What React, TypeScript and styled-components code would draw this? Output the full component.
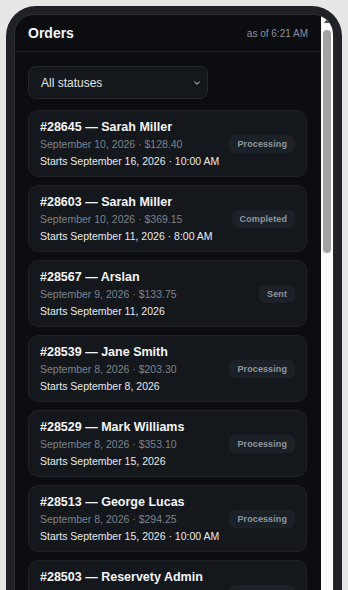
import React from 'react'
import styled, { createGlobalStyle } from 'styled-components'

const GlobalStyle = createGlobalStyle`
  html, body {
    margin: 0;
    padding: 0;
    background: #e7e7e7;
    overflow: hidden;
    font-family: "Liberation Sans", Arial, sans-serif;
  }
`

const Page = styled.div`
  padding: 6px;
`

const Phone = styled.div`
  width: 336px;
  box-sizing: border-box;
  background: #1f2327;
  border-radius: 30px;
  padding: 8px;
`

const Screen = styled.div`
  height: 620px;
  display: flex;
  background: #0b0d10;
  border: 1px solid #2a2e33;
  border-radius: 20px;
  overflow: hidden;
  box-sizing: border-box;
`

const Viewport = styled.div`
  flex: 1;
  min-width: 0;
  overflow: hidden;
`

const ScrollRail = styled.div`
  width: 12px;
  flex-shrink: 0;
  display: flex;
  flex-direction: column;
  align-items: center;
  padding-top: 4px;
  background: #fbfbfb;
`

const ArrowUp = styled.div`
  width: 0;
  height: 0;
  border-left: 3px solid transparent;
  border-right: 3px solid transparent;
  border-bottom: 4px solid #505050;
  margin-bottom: 7px;
`

const Thumb = styled.div`
  width: 8px;
  border-radius: 4px;
  background: #a2a2a2;
`

const Header = styled.div`
  display: flex;
  align-items: center;
  justify-content: space-between;
  height: 36px;
  padding: 0 13px;
  border-bottom: 1px solid #1e2227;
`

const Title = styled.h1`
  margin: 0;
  font-size: 14px;
  font-weight: 700;
  color: #f4f5f7;
`

const Stamp = styled.span`
  font-size: 10px;
  color: #8a9097;
`

const Body = styled.div`
  padding: 14px 14px 14px 13px;
`

const Select = styled.div`
  width: 180px;
  height: 33px;
  box-sizing: border-box;
  display: flex;
  align-items: center;
  justify-content: space-between;
  padding: 0 6px 0 12px;
  background: #14171b;
  border: 1px solid #23272c;
  border-radius: 8px;
  font-size: 12px;
  color: #e2e4e7;
  margin-bottom: 11px;
`

const List = styled.div`
  display: flex;
  flex-direction: column;
  gap: 8px;
`

const Card = styled.div`
  display: flex;
  align-items: center;
  justify-content: space-between;
  padding: 9px 11px 7px 11px;
  background: #14171b;
  border: 1px solid #1f2328;
  border-radius: 10px;
`

const Info = styled.div`
  display: flex;
  flex-direction: column;
`

const OrderTitle = styled.div`
  font-size: 12.5px;
  font-weight: 700;
  line-height: 14px;
  color: #f3f4f6;
`

const Meta = styled.div`
  margin-top: 3px;
  font-size: 10.5px;
  line-height: 15px;
  color: #7c838b;
`

const Starts = styled.div`
  margin-top: 2px;
  font-size: 10.5px;
  line-height: 15px;
  color: #e8eaec;
`

const Badge = styled.span`
  flex-shrink: 0;
  margin-top: -2px;
  padding: 4px 8px;
  border-radius: 6px;
  background: #1c2127;
  color: #8f969e;
  font-size: 9px;
  font-weight: 700;
  letter-spacing: 0.1px;
`

type Order = {
  id: number
  name: string
  date: string
  total: string
  starts: string
  status: string
}

const orders: Order[] = [
  { id: 28645, name: 'Sarah Miller', date: 'September 10, 2026', total: '$128.40', starts: 'September 16, 2026 · 10:00 AM', status: 'Processing' },
  { id: 28603, name: 'Sarah Miller', date: 'September 10, 2026', total: '$369.15', starts: 'September 11, 2026 · 8:00 AM', status: 'Completed' },
  { id: 28567, name: 'Arslan', date: 'September 9, 2026', total: '$133.75', starts: 'September 11, 2026', status: 'Sent' },
  { id: 28539, name: 'Jane Smith', date: 'September 8, 2026', total: '$203.30', starts: 'September 8, 2026', status: 'Processing' },
  { id: 28529, name: 'Mark Williams', date: 'September 8, 2026', total: '$353.10', starts: 'September 15, 2026', status: 'Processing' },
  { id: 28513, name: 'George Lucas', date: 'September 8, 2026', total: '$294.25', starts: 'September 15, 2026 · 10:00 AM', status: 'Processing' },
  { id: 28503, name: 'Reservety Admin', date: 'September 8, 2026', total: '$369.15', starts: 'September 12, 2026 · 9:00 AM', status: 'Processing' },
  { id: 28487, name: 'Jane Smith', date: 'September 7, 2026', total: '$118.60', starts: 'September 9, 2026', status: 'Completed' },
]

function Chevron() {
  return (
    <svg width="8" height="8" viewBox="0 0 10 10" fill="none">
      <path d="M2 3.5 L5 6.5 L8 3.5" stroke="#9aa0a6" strokeWidth="1.3" strokeLinecap="round" strokeLinejoin="round" />
    </svg>
  )
}

export default function App() {
  return (
    <>
      <GlobalStyle />
      <Page>
        <Phone>
          <Screen>
            <Viewport>
              <Header>
                <Title>Orders</Title>
                <Stamp>as of 6:21 AM</Stamp>
              </Header>
              <Body>
                <Select>
                  <span>All statuses</span>
                  <Chevron />
                </Select>
                <List>
                  {orders.map(order => (
                    <Card key={order.id}>
                      <Info>
                        <OrderTitle>
                          #{order.id} — {order.name}
                        </OrderTitle>
                        <Meta>
                          {order.date} · {order.total}
                        </Meta>
                        <Starts>Starts {order.starts}</Starts>
                      </Info>
                      <Badge>{order.status}</Badge>
                    </Card>
                  ))}
                </List>
              </Body>
            </Viewport>
            <ScrollRail>
              <ArrowUp />
              <Thumb style={{ height: 223 }} />
            </ScrollRail>
          </Screen>
        </Phone>
      </Page>
    </>
  )
}
